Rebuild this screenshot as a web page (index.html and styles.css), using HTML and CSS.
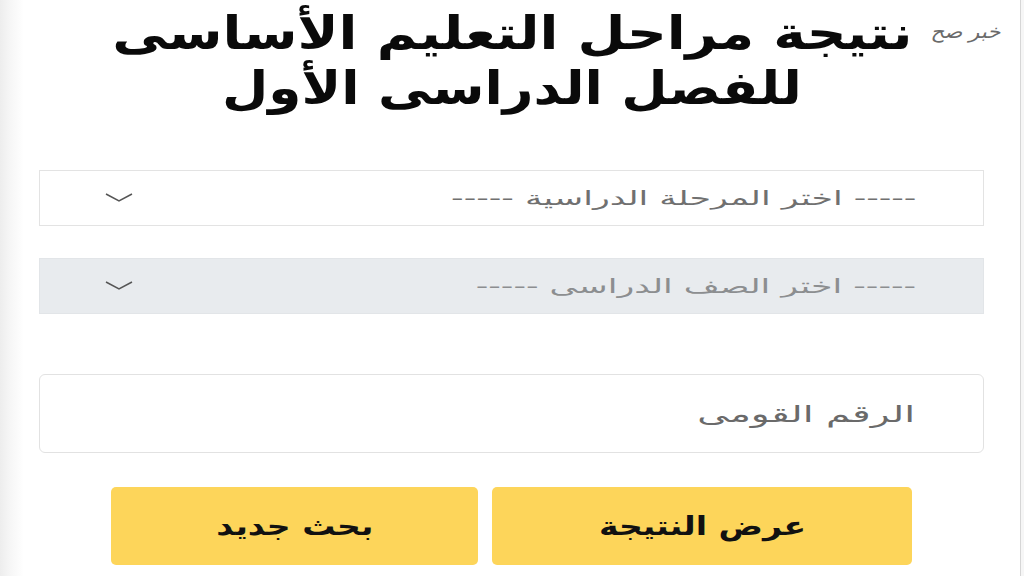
FILE: index.html
```html
<!DOCTYPE html>
<html lang="ar" dir="rtl">
<head>
<meta charset="utf-8">
<title>نتيجة مراحل التعليم الأساسى</title>
<link rel="stylesheet" href="styles.css">
</head>
<body>
<div class="page">
  <span class="brand">خبر صح</span>
  <h1 class="title"><span class="title-line">نتيجة مراحل التعليم الأساسى</span><span class="title-line title-line-2">للفصل الدراسى الأول</span></h1>

  <form class="form">
    <div class="select">
      <span class="select-text">----- اختر المرحلة الدراسية -----</span>
      <svg class="chev" width="28" height="12" viewBox="0 0 28 12"><polyline points="1,2 14,9 27,2" fill="none" stroke="#555" stroke-width="1.5"/></svg>
    </div>
    <div class="select select-disabled">
      <span class="select-text muted">----- اختر الصف الدراسى -----</span>
      <svg class="chev" width="28" height="12" viewBox="0 0 28 12"><polyline points="1,2 14,9 27,2" fill="none" stroke="#555" stroke-width="1.5"/></svg>
    </div>
    <div class="input">
      <span class="placeholder">الرقم القومى</span>
    </div>
    <div class="actions">
      <button type="button" class="btn"><span class="btn-label">عرض النتيجة</span></button>
      <button type="button" class="btn"><span class="btn-label">بحث جديد</span></button>
    </div>
  </form>
</div>
</body>
</html>
```
FILE: styles.css
```css
* { box-sizing: border-box; }

html, body {
  margin: 0;
  padding: 0;
  background: #ffffff;
}

body {
  font-family: "DejaVu Sans", "Noto Sans", sans-serif;
  color: #111;
}

/* page frame: soft shade on the left, thin rule near the right edge */
.page {
  position: relative;
  width: 1024px;
  height: 576px;
  background: linear-gradient(to right,
    #ededed 0, #f6f6f6 10px, #ffffff 24px,
    #ffffff 1020px, #d6d6d6 1020px, #d6d6d6 1021px, #f6f6f6 1021px);
  overflow: hidden;
}

.brand {
  position: absolute;
  top: 20px;
  right: 24px;
  font-size: 19px;
  font-style: italic;
  font-weight: 300;
  color: #6a6a6a;
  display: inline-block;
  transform: scaleX(1.12);
  transform-origin: right center;
}

.title {
  margin: 0;
  padding-top: 6px;
  text-align: center;
  font-size: 46px;
  font-weight: bold;
  line-height: 55px;
  color: #0a0a0a;
  display: flex;
  flex-direction: column;
  align-items: center;
}

.title-line {
  display: block;
  transform: scaleX(1.2);
}

.title-line-2 { transform: scaleX(1.16); }

.form {
  padding: 54px 40px 0 39px;
  display: flex;
  flex-direction: column;
}

.select {
  height: 56px;
  border: 1px solid #e3e3e3;
  background: #fff;
  display: flex;
  align-items: center;
  justify-content: space-between;
  padding: 0 67px 0 65px;
}

.select + .select { margin-top: 32px; }

.select-disabled {
  background: #e8ebee;
  border-color: #e2e5e8;
}

.select-text {
  display: inline-block;
  font-size: 20px;
  color: #707070;
  transform: scaleX(1.74);
  transform-origin: right center;
  white-space: nowrap;
}

.select-text.muted { color: #8c8e90; }

.chev { display: block; margin-top: 0; }

.input {
  margin-top: 60px;
  height: 79px;
  border: 1px solid #e2e2e2;
  border-radius: 6px;
  background: #fff;
  display: flex;
  align-items: center;
  padding: 0 68px;
}

.placeholder {
  display: inline-block;
  font-size: 23px;
  color: #6a6a6a;
  transform: scaleX(1.7);
  transform-origin: right center;
}

.actions {
  margin-top: 34px;
  padding: 0 72px;
  display: grid;
  grid-template-columns: 420px 367px;
  column-gap: 14px;
}

.btn {
  height: 78px;
  border: none;
  border-radius: 5px;
  background: #fdd55a;
  font-family: "DejaVu Sans", sans-serif;
  font-size: 26px;
  font-weight: bold;
  color: #111;
  cursor: pointer;
}

.btn-label {
  display: inline-block;
  transform: scaleX(1.27);
}
```
